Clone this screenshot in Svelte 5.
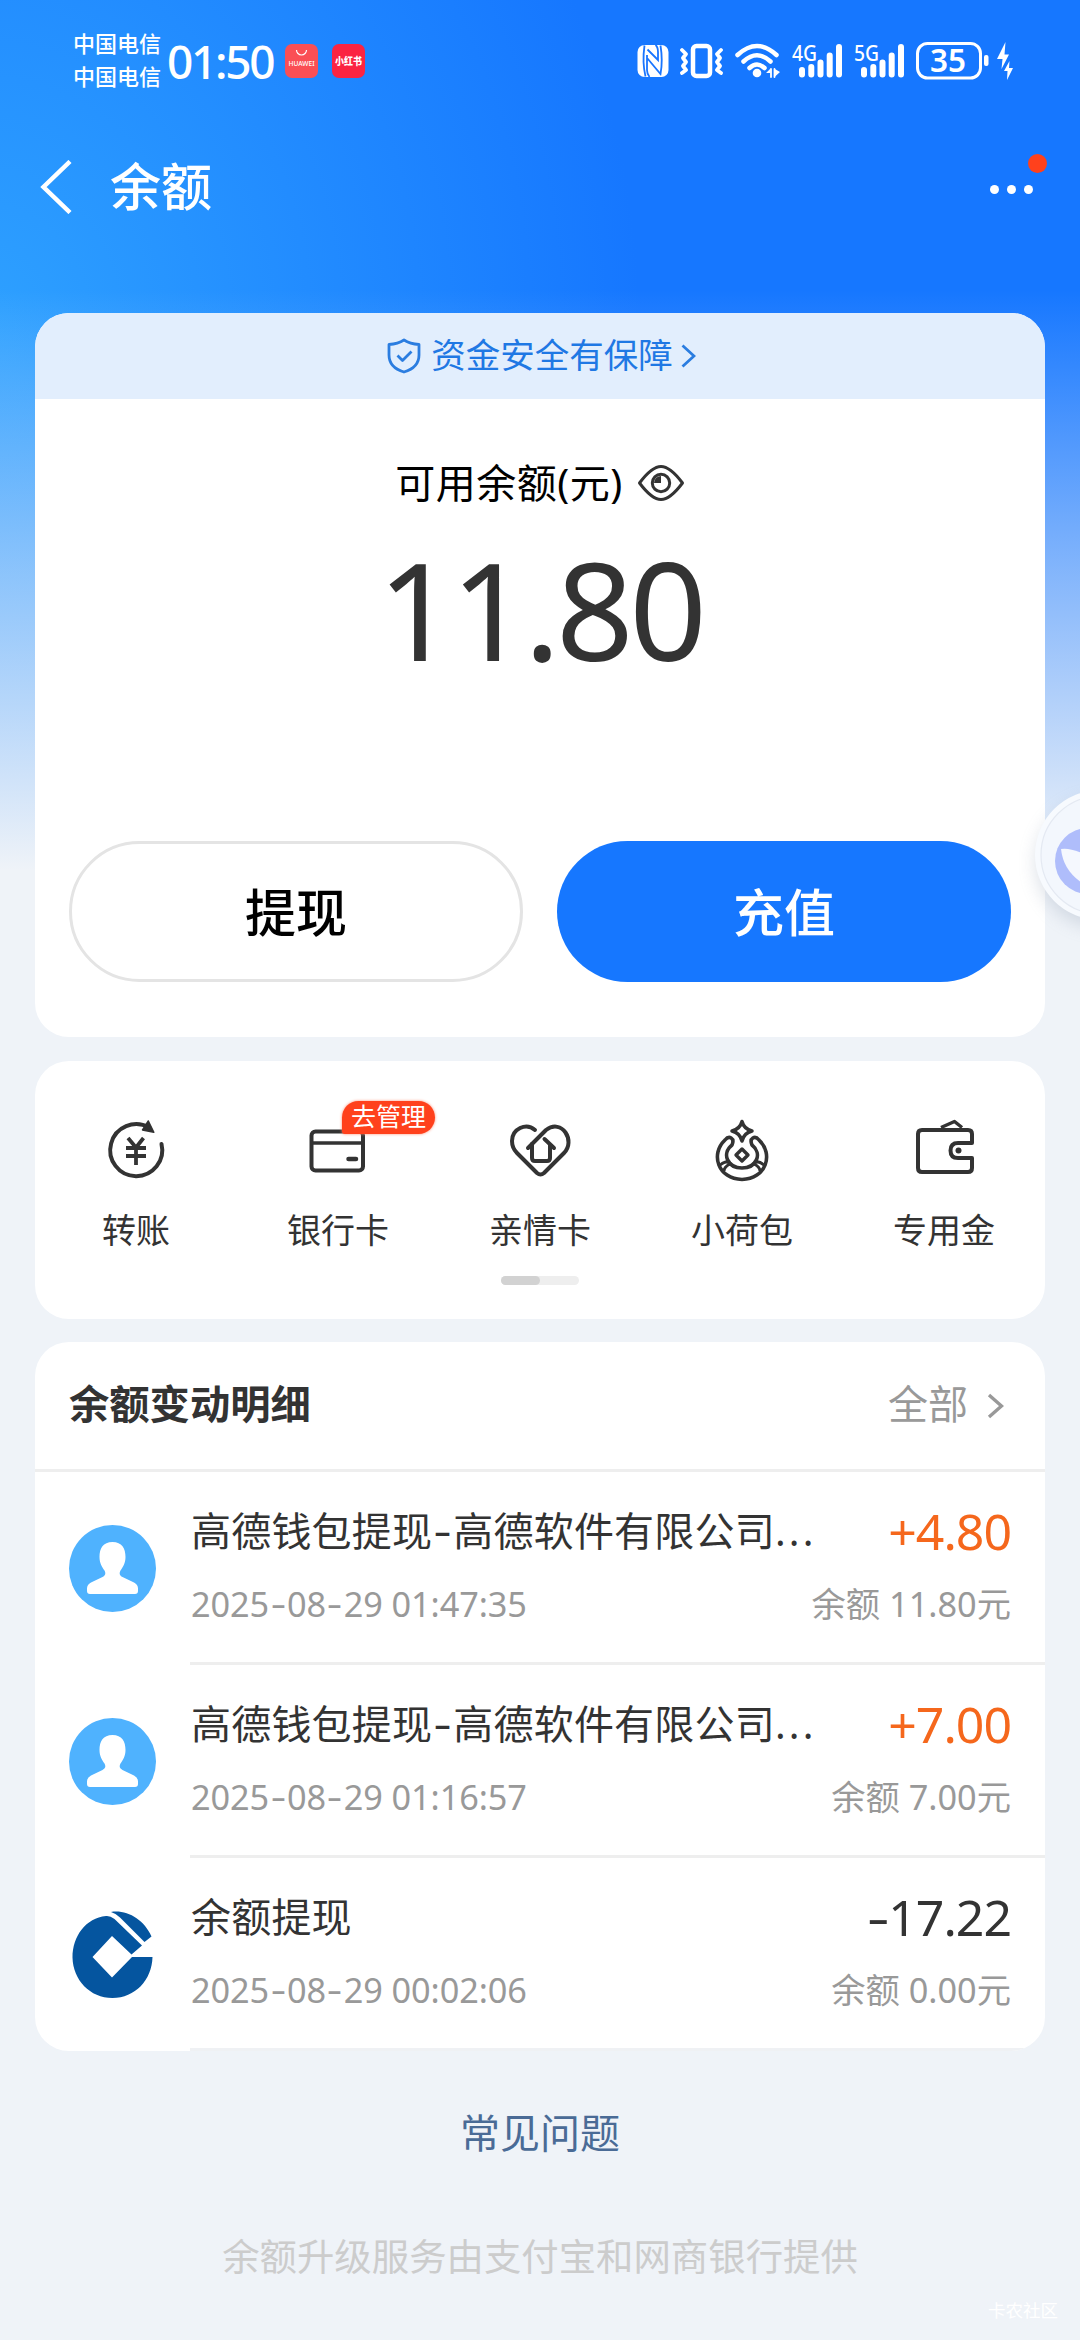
<script>
  const actions = [
    { id: 'transfer', label: '转账' },
    { id: 'card', label: '银行卡', badge: '去管理' },
    { id: 'family', label: '亲情卡' },
    { id: 'pouch', label: '小荷包' },
    { id: 'wallet', label: '专用金' }
  ];

  const records = [
    { icon: 'user', title: '高德钱包提现-高德软件有限公司', cut: true, time: '2025-08-29 01:47:35', amount: '+4.80', income: true, balance: '余额 11.80元' },
    { icon: 'user', title: '高德钱包提现-高德软件有限公司', cut: true, time: '2025-08-29 01:16:57', amount: '+7.00', income: true, balance: '余额 7.00元' },
    { icon: 'bank', title: '余额提现', cut: false, time: '2025-08-29 00:02:06', amount: '-17.22', income: false, balance: '余额 0.00元' }
  ];
</script>

{#snippet dashed(text)}{#each text.split('-') as part, i}{#if i > 0}<span class="dash">-</span>{/if}{part}{/each}{/snippet}

{#snippet signal(label)}
  <svg class="signal" width="50" height="50" viewBox="0 -6 50 50">
    <text x="0" y="18.5" font-size="22" textLength="25" lengthAdjust="spacingAndGlyphs">{label}</text>
    <g stroke="#fff" stroke-width="6" stroke-linecap="round">
      <path d="M10 28v4.500M19.300 25v7.500M28.500 20.500v12M37.700 13.500v19M47 5v27.500" />
    </g>
  </svg>
{/snippet}

<main class="page">
  <header class="status">
    <div class="carriers"><span>中国电信</span><span>中国电信</span></div>
    <div class="clock">01:50</div>
    <svg class="app-icon" width="33" height="34" viewBox="0 0 33 34">
      <rect width="33" height="34" rx="7" fill="#fa4f55" />
      <path d="M11.500 6a5 5 0 0 0 10 0" fill="none" stroke="#fff" stroke-width="1.200" />
      <text x="3.500" y="21.500" font-size="6.500" font-weight="600" textLength="26" lengthAdjust="spacingAndGlyphs">HUAWEI</text>
    </svg>
    <svg class="app-icon second" width="33" height="34" viewBox="0 0 33 34">
      <rect width="33" height="34" rx="7" fill="#fb2442" />
      <text class="heavy" x="3" y="21" font-size="10" textLength="27" lengthAdjust="spacingAndGlyphs">小红书</text>
    </svg>

    <div class="indicators">
      <svg width="32" height="34" viewBox="0 0 32 34">
        <rect x="0.500" y="1" width="31" height="32" rx="7" fill="#fff" />
        <path d="M7.500 1.500C6 12 6 22 8.500 32.500M10 11v15q0 4 2.500 7M10.500 5.500 L21 16V8Q21 3 18.500 1M10.500 14.500 L23.500 30Q26 17 23.500 1.500" fill="none" stroke="#1975ff" stroke-width="1.800" />
      </svg>
      <svg class="vibrate" width="43" height="36" viewBox="0 0 43 36" fill="none" stroke="#fff">
        <rect x="13" y="3" width="17" height="30" rx="3.500" stroke-width="4.500" />
        <path d="M2 7l4 4-3 4 3 4-3 4 3 4-4 3M41 7l-4 4 3 4-3 4 3 4-3 4 4 3" stroke-width="3.800" stroke-linejoin="round" stroke-linecap="round" />
      </svg>
      <svg class="wifi" width="45" height="36" viewBox="0 0 45 36" fill="none" stroke="#fff" stroke-width="4.500" stroke-linecap="round">
        <path d="M2.500 12Q22 -6 41.500 12M8.500 18.500Q22 6 35.500 18.500M14.500 25Q22 18 29.500 25" />
        <circle cx="22" cy="30" r="4.300" fill="#fff" stroke="none" />
        <path d="M31 30h4.500v-4.500zM35.500 30v4.500zM39 25.500v9l6-5.500z" fill="#fff" stroke="none" />
        <path d="M36 26v8M39.500 26v8" stroke-width="1.800" />
      </svg>
      {@render signal('4G')}
      {@render signal('5G')}
      <svg class="battery" width="74" height="50" viewBox="0 -6 74 50">
        <rect x="1.500" y="1.500" width="63" height="34.500" rx="10" fill="none" stroke="#fff" stroke-width="3" />
        <rect x="68" y="13" width="4.500" height="11" rx="2" fill="#fff" />
        <text class="level" x="14" y="30" font-size="32" textLength="36" lengthAdjust="spacingAndGlyphs">35</text>
      </svg>
      <svg class="bolt" width="17" height="38" viewBox="0 0 17 38" fill="#fff">
        <path d="M8.500 0 0 17h5.500L4.500 27 12 12.500H7.500z" />
        <path d="M12.500 19 7 29h3.500l-.500 9 6-12H12z" />
      </svg>
    </div>
  </header>

  <nav class="nav">
    <svg class="back" width="34" height="54" viewBox="0 0 34 54" fill="none" stroke="#fff" stroke-width="4.500">
      <path d="M31 1.500 4.500 27 31 52.500" />
    </svg>
    <h1>余额</h1>
    <div class="more">
      <i></i><i></i><i></i>
      <b class="dot"></b>
    </div>
  </nav>

  <section class="card balance">
    <div class="guard">
      <svg width="34" height="36" viewBox="0 0 34 36" fill="none" stroke="#2b7de0" stroke-width="2.800" stroke-linejoin="round">
        <path d="M17 2Q23 6 32 6.500V17Q32 29.500 17 34 2 29.500 2 17V6.500Q11 6 17 2z" />
        <path d="M10.500 17.500l5 5 9-9" />
      </svg>
      <span>资金安全有保障</span>
      <svg class="guard-arrow" width="15" height="24" viewBox="0 0 15 24" fill="none" stroke="#2b7de0" stroke-width="2.800">
        <path d="M1.500 1.500 13 12 1.500 22.500" />
      </svg>
    </div>
    <div class="label">
      <span>可用余额(元)</span>
      <svg width="48" height="38" viewBox="0 0 48 38" fill="none" stroke="#333" stroke-width="3">
        <path d="M2.500 19C10 9 17 2.500 24 2.500S38 9 45.500 19C38 29 31 35.500 24 35.500S10 29 2.500 19z" stroke-linejoin="round" />
        <circle cx="24" cy="19" r="8.700" />
        <path d="M24 12v7h-7a7 7 0 0 1 7-7z" fill="#333" stroke="none" />
      </svg>
    </div>
    <div class="amount">11.80</div>
    <div class="buttons">
      <button class="ghost">提现</button>
      <button class="primary">充值</button>
    </div>
  </section>

  <section class="card actions">
    <div class="grid">
      {#each actions as a (a.id)}
        <div class="action">
          <svg width="64" height="64" viewBox="0 0 64 64" fill="none" stroke="#333" stroke-width="4" stroke-linejoin="round">
            {#if a.id === 'transfer'}
              <path d="M45 9.500A26 26 0 1 0 57.500 26" stroke-linecap="round" />
              <path d="M44.300 3 49.800 14.300 38.500 12z" fill="#333" stroke-width="1.500" />
              <path d="M24 20l8 9.500 7.500-9.500M22 30h20M22 38h20M32 30v17" stroke-width="3.800" />
            {:else if a.id === 'card'}
              <rect x="5.500" y="13.500" width="51.500" height="39" rx="4" />
              <path d="M6 25h51" stroke-width="3.500" />
              <path d="M42.500 41H50" stroke-linecap="round" stroke-width="4.500" />
            {:else if a.id === 'family'}
              <path d="M27 12C18 4 4 11 4 23c0 5 2 9 5 12l20 20q3.500 3 7 0l20-20C68 23 54 0 38 12L20 30" stroke-linecap="round" />
              <path d="M24 26v14q0 3 3 3h12q3 0 3-3V27M46 30 36.500 21" stroke-linecap="round" />
            {:else if a.id === 'pouch'}
              <path d="M32 3.500Q34 11 42 13 34 15 32 23 30 15 22 13 30 11 32 3.500z" stroke-width="3.500" />
              <path d="M22 27C25 20 19 17 15 22 0 36 8 61 32 61.500 56 61 64 36 49 22 45 17 39 20 42 27 53 36 46 50 32 50S11 36 22 27z" stroke-width="3.600" />
              <path d="M9 48q7-7 12-2M55 48q-7-7-12-2M14 53q0-4 6-7M50 53q0-4-6-7" stroke-width="3" />
              <path d="M32 31 38 37 32 43 26 37z" stroke-width="3.400" />
            {:else}
              <path d="M60 25V16q0-4-4-4H10q-4 0-4 4v34q0 4 4 4h46q4 0 4-4V40H46q-7.500 0-7.500-7.500T46 25z" />
              <path d="M29 9.500 42.500 3.500 50 9.500" stroke-width="3.500" />
              <circle cx="46.500" cy="32.500" r="3" fill="#333" stroke="none" />
            {/if}
          </svg>
          {#if a.badge}<span class="badge">{a.badge}</span>{/if}
          <span class="name">{a.label}</span>
        </div>
      {/each}
    </div>
    <div class="pager"><i></i></div>
  </section>

  <section class="card records">
    <div class="head">
      <h2>余额变动明细</h2>
      <span class="all">全部</span>
      <svg width="17" height="26" viewBox="0 0 17 26" fill="none" stroke="#999" stroke-width="3.400">
        <path d="M2 2 14.500 13 2 24" />
      </svg>
    </div>
    {#each records as r}
      <div class="row">
        {#if r.icon === 'user'}
          <svg class="avatar" width="87" height="87" viewBox="0 0 87 87">
            <circle cx="43.500" cy="43.500" r="43.500" fill="#4fb2fe" />
            <path d="M43.500 17C34 17 30.500 23.500 30.500 32c0 6 2.500 10 5 13.500 1.500 3 1 5-2 6.500L22 57.500q-4 2-4 6V66q0 3 3 3h45q3 0 3-3v-2.500q0-4-4-6L53.500 52c-3-1.500-3.500-3.500-2-6.500 2.500-3.500 5-7.500 5-13.500 0-8.500-3.500-15-13-15z" fill="#fff" />
          </svg>
        {:else}
          <svg class="avatar" width="87" height="87" viewBox="0 0 87 87" fill="#05559f">
            <path d="M37 5C17 7 3.500 25 3.500 46.500 4 69 21 87 43.500 87S83 69 83.500 46H63L43 66.500 23.500 46 43 25l19.500 18.500L73 34.500 45.500 8Q41 4.500 37 5z" />
            <path d="M42 1C58-1.500 75 8.500 82.500 25.500L75.500 31 51 6.500Q47 2.500 42 1z" />
          </svg>
        {/if}
        <div class="info">
          <div class="line">
            <span class="title">{@render dashed(r.title)}{#if r.cut}<span class="cut">...</span>{/if}</span>
            <span class="sum" class:income={r.income}>{@render dashed(r.amount)}</span>
          </div>
          <div class="line sub">
            <span class="time">{@render dashed(r.time)}</span>
            <span>{r.balance}</span>
          </div>
        </div>
      </div>
    {/each}
  </section>

  <div class="faq">常见问题</div>
  <div class="provider">余额升级服务由支付宝和网商银行提供</div>

  <svg class="assistant" width="80" height="190" viewBox="0 0 80 190">
    <defs>
      <filter id="soft" x="-40%" y="-40%" width="180%" height="180%"><feGaussianBlur stdDeviation="9" /></filter>
    </defs>
    <circle cx="100" cy="103" r="64" fill="#8090a8" opacity="0.280" filter="url(#soft)" />
    <circle cx="100" cy="95" r="65" fill="#f7fafe" />
    <circle cx="100" cy="95" r="59" fill="#f3f7fd" stroke="#e4e9f2" stroke-width="1.200" />
    <circle cx="88" cy="101" r="33" fill="#afbdfb" />
    <path d="M61 89Q72 87 92 98V128Q64 116 61 89z" fill="#f5f8fe" />
  </svg>
  <span class="mark">卡农社区</span>
</main>

<style>
  :global(body) {
    margin: 0;
    background: #eff3f8;
  }
  .page {
    position: relative;
    box-sizing: border-box;
    width: 1080px;
    height: 2340px;
    overflow: hidden;
    padding: 0 35px;
    font-family: 'Noto Sans', 'Noto Sans CJK SC', sans-serif;
    color: #333;
    background:
      linear-gradient(to bottom, rgba(239, 243, 248, 0) 290px, rgba(239, 243, 248, 0.500) 570px, #eff3f8 870px),
      radial-gradient(ellipse 660px 760px at -20px 330px, #2ea1ff 0, #1677ff 100%);
  }
  svg {
    display: block;
    flex: none;
  }
  svg text {
    fill: #fff;
    font-weight: 500;
  }
  svg .heavy {
    font-weight: 800;
  }
  svg .level {
    font-weight: 600;
  }
  .status {
    display: flex;
    align-items: center;
    height: 122px;
    margin: 0 -35px;
    padding: 0 66px 0 73px;
    color: #fff;
  }
  .carriers {
    display: flex;
    flex-direction: column;
    width: 88px;
    margin-top: -2px;
    font-size: 22px;
    font-weight: 500;
    line-height: 33px;
  }
  .clock {
    width: 124px;
    padding-left: 6px;
    box-sizing: border-box;
    font-size: 46px;
    font-weight: 500;
    line-height: 60px;
    letter-spacing: -2.300px;
  }
  .second {
    margin-left: 14px;
  }
  .indicators {
    display: flex;
    align-items: center;
    margin-left: auto;
  }
  .vibrate { margin-left: 11px; }
  .wifi { margin-left: 12px; }
  .signal { margin-left: 12px; }
  .battery { margin-left: 12px; }
  .bolt { margin-left: 7px; }
  .nav {
    display: flex;
    align-items: center;
    height: 130px;
    margin-bottom: 61px;
    padding-left: 4px;
  }
  h1 {
    margin: -3px 0 0 37px;
    color: #fff;
    font-size: 51px;
    font-weight: 500;
    line-height: 60px;
  }
  .more {
    position: relative;
    display: flex;
    gap: 8px;
    margin: 4px 12px 0 auto;
  }
  .more i {
    width: 9px;
    height: 9px;
    border-radius: 50%;
    background: #fff;
  }
  .dot {
    position: absolute;
    right: -14px;
    top: -31px;
    width: 19px;
    height: 19px;
    border-radius: 50%;
    background: #ff411c;
  }
  .card {
    box-sizing: border-box;
    border-radius: 34px;
    overflow: hidden;
    background: #fff;
  }
  .balance {
    height: 724px;
  }
  .guard {
    display: flex;
    align-items: center;
    justify-content: center;
    height: 86px;
    padding-left: 3px;
    background: #e2eefd;
    color: #1f78e4;
    font-size: 34.500px;
    line-height: 50px;
  }
  .guard span {
    margin: -2px 8px 0 10px;
  }
  .label {
    display: flex;
    align-items: center;
    justify-content: center;
    gap: 14px;
    height: 50px;
    margin-top: 59px;
    color: #000;
    font-size: 40px;
    line-height: 50px;
    letter-spacing: 0.500px;
  }
  .amount {
    margin-top: 51px;
    font-size: 136px;
    line-height: 100px;
    letter-spacing: -4.500px;
    text-align: center;
  }
  .buttons {
    display: grid;
    grid-template-columns: 1fr 1fr;
    gap: 34px;
    margin: 182px 34px 0;
  }
  button {
    box-sizing: border-box;
    height: 141px;
    padding: 0;
    border: 0;
    border-radius: 71px;
    font-family: inherit;
    font-size: 51px;
    font-weight: 500;
    line-height: 60px;
  }
  .ghost {
    border: 3px solid #e4e4e4;
    background: #fff;
    color: #000;
  }
  .primary {
    background: #1677ff;
    color: #fff;
  }
  .actions {
    height: 258px;
    margin-top: 24px;
    padding-top: 57px;
  }
  .grid {
    display: grid;
    grid-template-columns: repeat(5, 1fr);
  }
  .action {
    position: relative;
    display: flex;
    flex-direction: column;
    align-items: center;
  }
  .name {
    margin-top: 23px;
    font-size: 34px;
    line-height: 50px;
  }
  .badge {
    position: absolute;
    left: 105px;
    top: -17px;
    width: 93px;
    height: 33px;
    border-radius: 17px 17px 17px 3px;
    background: #ff411c;
    box-shadow: 0 0 3px #ff8a70;
    color: #fff;
    font-size: 25px;
    line-height: 31px;
    text-align: center;
  }
  .pager {
    width: 78px;
    height: 9px;
    margin: 21px auto 0;
    border-radius: 5px;
    background: #eee;
  }
  .pager i {
    display: block;
    width: 39px;
    height: 9px;
    border-radius: 5px;
    background: #d2d2d2;
  }
  .records {
    margin-top: 23px;
  }
  .head {
    display: flex;
    align-items: center;
    height: 127px;
    padding: 0 41px 0 34px;
    border-bottom: 3px solid #eee;
    font-size: 40px;
    line-height: 50px;
  }
  h2 {
    margin: -4px auto 0 0;
    font-size: 40.300px;
    font-weight: 700;
    line-height: 50px;
  }
  .all {
    margin: -4px 19px 0 0;
    color: #999;
  }
  .row {
    display: flex;
    height: 193px;
    padding-left: 34px;
  }
  .avatar {
    margin-top: 53px;
  }
  .info {
    flex: 1;
    margin-left: 34px;
    padding: 29px 34px 0 1px;
    border-bottom: 3px solid #eee;
  }
  .row:last-child .info {
    border-color: #eff1f4;
  }
  .line {
    display: flex;
    align-items: center;
    justify-content: space-between;
    height: 60px;
    font-size: 40px;
    line-height: 60px;
    white-space: nowrap;
  }
  .title {
    letter-spacing: 0.200px;
  }
  .sub {
    margin-top: 13px;
    color: #999;
    font-size: 34.300px;
  }
  .time {
    letter-spacing: -0.100px;
  }
  .dash {
    display: inline-block;
    margin: 0 0.100em;
    transform: translateY(-0.030em) scaleX(1.400);
  }
  .sum .dash {
    margin: 0 0.060em 0 0;
  }
  .cut {
    letter-spacing: 3.200px;
  }
  .sum {
    font-size: 50px;
    letter-spacing: -1px;
  }
  .income {
    color: #f5671c;
  }
  .faq {
    margin-top: 52px;
    color: #4a6b96;
    font-size: 40px;
    line-height: 60px;
    text-align: center;
  }
  .provider {
    margin-top: 64px;
    color: #ccc;
    font-size: 37.400px;
    line-height: 60px;
    text-align: center;
  }
  .assistant {
    position: absolute;
    right: 0;
    top: 760px;
  }
  .mark {
    position: absolute;
    right: 22px;
    bottom: 18px;
    color: #fff;
    font-size: 17.500px;
    line-height: 24px;
  }
</style>
